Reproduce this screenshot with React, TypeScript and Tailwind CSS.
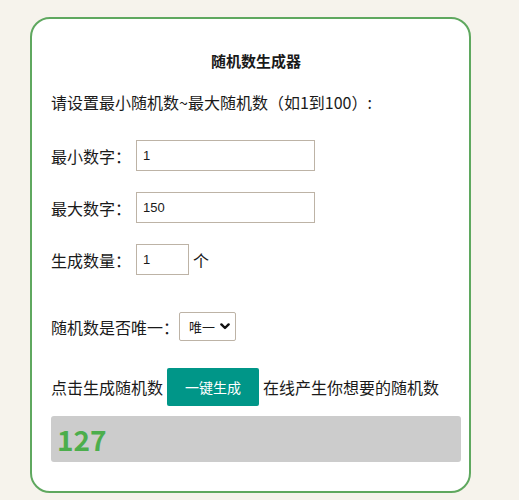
import { useState } from 'react'

const cjk = { fontFamily: '"Noto Sans CJK SC", "Noto Sans", sans-serif' }
const latin = { fontFamily: '"Liberation Sans", Arial, sans-serif' }

export default function App() {
  const [min, setMin] = useState('1')
  const [max, setMax] = useState('150')
  const [count, setCount] = useState('1')
  const [unique, setUnique] = useState('1')
  const [result, setResult] = useState('127')

  const generate = () => {
    const lo = parseInt(min) || 0
    const hi = parseInt(max) || 0
    const n = Math.max(1, parseInt(count) || 1)
    const out: number[] = []
    for (let i = 0; i < n; i++) {
      const v = Math.floor(Math.random() * (hi - lo + 1)) + lo
      if (unique === '1' && out.includes(v) && out.length < hi - lo + 1) {
        i--
        continue
      }
      out.push(v)
    }
    setResult(out.join(' '))
  }

  return (
    <div className="h-[500px] w-full overflow-hidden bg-[#f6f3ec] pt-[17px] text-[#1a1a1a]" style={cjk}>
      <div className="ml-[30px] h-[476px] w-[441px] rounded-[20px] border-2 border-[#5fa85f] bg-white pl-[19px] pr-[8px] pt-[32px]">
        <h1 className="text-center text-[15px] font-bold leading-[20px]">随机数生成器</h1>
        <p className="mt-[19px] text-[16px] leading-[24px]">请设置最小随机数~最大随机数（如1到100）:</p>

        <div className="mt-[26px] flex items-center">
          <span className="w-[85px] text-[16px]">最小数字：</span>
          <input
            value={min}
            onChange={(e) => setMin(e.target.value)}
            className="h-[31px] w-[179px] border border-[#bdb3a6] px-[6px] text-[13px] outline-none"
            style={latin}
          />
        </div>
        <div className="mt-[21px] flex items-center">
          <span className="w-[85px] text-[16px]">最大数字：</span>
          <input
            value={max}
            onChange={(e) => setMax(e.target.value)}
            className="h-[31px] w-[179px] border border-[#bdb3a6] px-[6px] text-[13px] outline-none"
            style={latin}
          />
        </div>
        <div className="mt-[21px] flex items-center">
          <span className="w-[85px] text-[16px]">生成数量：</span>
          <input
            value={count}
            onChange={(e) => setCount(e.target.value)}
            className="h-[31px] w-[53px] border border-[#bdb3a6] px-[6px] text-[13px] outline-none"
            style={latin}
          />
          <span className="ml-[4px] text-[16px]">个</span>
        </div>

        <div className="mt-[37px] flex items-center">
          <span className="w-[128px] text-[16px]">随机数是否唯一：</span>
          <div className="relative">
            <select
              value={unique}
              onChange={(e) => setUnique(e.target.value)}
              className="h-[29px] w-[57px] appearance-none rounded-[2px] border border-[#bdb3a6] bg-white pl-[9px] text-[13px] outline-none"
            >
              <option value="1">唯一</option>
              <option value="0">可重复</option>
            </select>
            <svg className="pointer-events-none absolute right-[6px] top-[11px] h-[7px] w-[10px]" viewBox="0 0 10 7">
              <path d="M1.4 1.4 5 5 8.6 1.4" fill="none" stroke="#111" strokeWidth="2.4" strokeLinecap="round" strokeLinejoin="round" />
            </svg>
          </div>
        </div>

        <div className="mt-[27px] flex items-center text-[16px]">
          <span>点击生成随机数</span>
          <button
            type="button"
            onClick={generate}
            className="mx-[4px] h-[38px] w-[92px] rounded-[2px] bg-[#009688] text-[14px] text-white"
          >
            一键生成
          </button>
          <span>在线产生你想要的随机数</span>
        </div>

        <div className="mt-[10px] flex h-[46px] w-[410px] items-center rounded-[3px] bg-[#cccccc] pl-[6px]">
          <span className="text-[28px] font-bold leading-none text-[#4cae4c]">{result}</span>
        </div>
      </div>
    </div>
  )
}
